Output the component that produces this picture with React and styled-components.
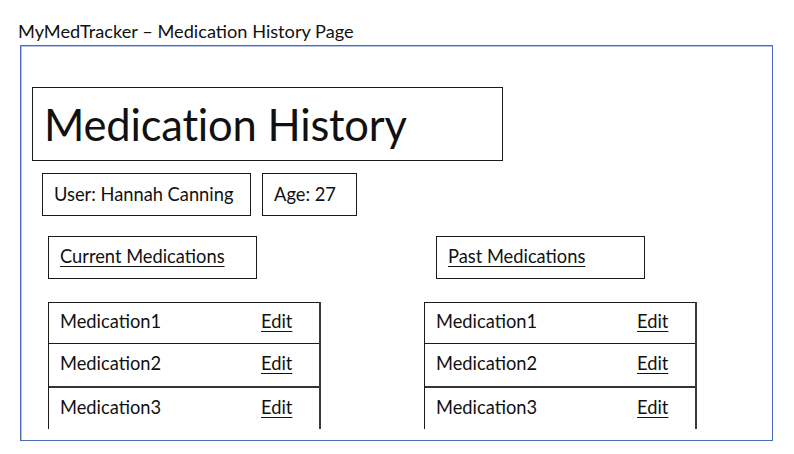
import React from "react"
import styled, { createGlobalStyle } from "styled-components"

const GlobalStyle = createGlobalStyle`
  html, body {
    margin: 0;
    padding: 0;
    background: #ffffff;
  }
  body {
    font-family: "Lato", "Open Sans", "Liberation Sans", sans-serif;
    color: #111;
  }
`

const Page = styled.div`
  width: 794px;
  height: 454px;
  padding: 19px 0 0 18px;
  box-sizing: border-box;
`

const Caption = styled.div`
  font-size: 18.2px;
  line-height: 24px;
  height: 26px;
`

const Frame = styled.div`
  width: 753px;
  height: 396px;
  margin-left: 2px;
  box-sizing: border-box;
  border: 1px solid #4a6db5;
  box-shadow: inset 1px 1px 0 #b4c4e4;
  padding: 41px 0 0 11px;
  display: flex;
  flex-direction: column;
`

const TitleBox = styled.div`
  width: 471px;
  height: 74px;
  box-sizing: border-box;
  border: 1px solid #1a1a1a;
  display: flex;
  align-items: center;
  padding-left: 11px;
  font-size: 43.5px;
  letter-spacing: -0.2px;
`

const InfoRow = styled.div`
  display: flex;
  gap: 11px;
  margin: 12px 0 0 10px;
`

const Box = styled.div`
  width: ${p => p.$w}px;
  height: ${p => p.$h || 43}px;
  box-sizing: border-box;
  border: 1px solid #1a1a1a;
  display: flex;
  align-items: center;
  padding: 0 0 2px 11px;
  font-size: 18.3px;
`

const Columns = styled.div`
  display: grid;
  grid-template-columns: 376px 1fr;
  margin: 20px 0 0 16px;
`

const Column = styled.div`
  display: flex;
  flex-direction: column;
`

const Heading = styled(Box)`
  margin-left: ${p => p.$offset || 0}px;
  text-decoration: underline;
  text-underline-offset: 3px;
  padding-bottom: 4px;
`

const List = styled.div`
  width: 273px;
  margin-top: 23px;
  border-left: 1px solid #1a1a1a;
  border-right: 2px solid #3a3a3a;
  box-sizing: border-box;
`

const Row = styled.div`
  display: flex;
  align-items: center;
  height: ${p => p.$h}px;
  box-sizing: border-box;
  border-top: ${p => (p.$heavy ? "2px solid #333" : "1px solid #1a1a1a")};
  padding: 0 0 4px 11px;
  font-size: 18.3px;
`

const Name = styled.span`
  width: 201px;
`

const EditLink = styled.span`
  text-decoration: underline;
  text-underline-offset: 3px;
`

const meds = [
  { name: "Medication1", h: 41 },
  { name: "Medication2", h: 43 },
  { name: "Medication3", h: 43, heavy: true },
]

const MedList = () => (
  <List>
    {meds.map(m => (
      <Row key={m.name} $h={m.h} $heavy={m.heavy}>
        <Name>{m.name}</Name>
        <EditLink>Edit</EditLink>
      </Row>
    ))}
  </List>
)

export default function App() {
  return (
    <Page>
      <GlobalStyle />
      <Caption>MyMedTracker – Medication History Page</Caption>
      <Frame>
        <TitleBox>Medication History</TitleBox>
        <InfoRow>
          <Box $w={209}>User: Hannah Canning</Box>
          <Box $w={95}>Age: 27</Box>
        </InfoRow>
        <Columns>
          <Column>
            <Heading $w={209} $h={43}>Current Medications</Heading>
            <MedList />
          </Column>
          <Column>
            <Heading $w={209} $h={43} $offset={12}>Past Medications</Heading>
            <MedList />
          </Column>
        </Columns>
      </Frame>
    </Page>
  )
}
